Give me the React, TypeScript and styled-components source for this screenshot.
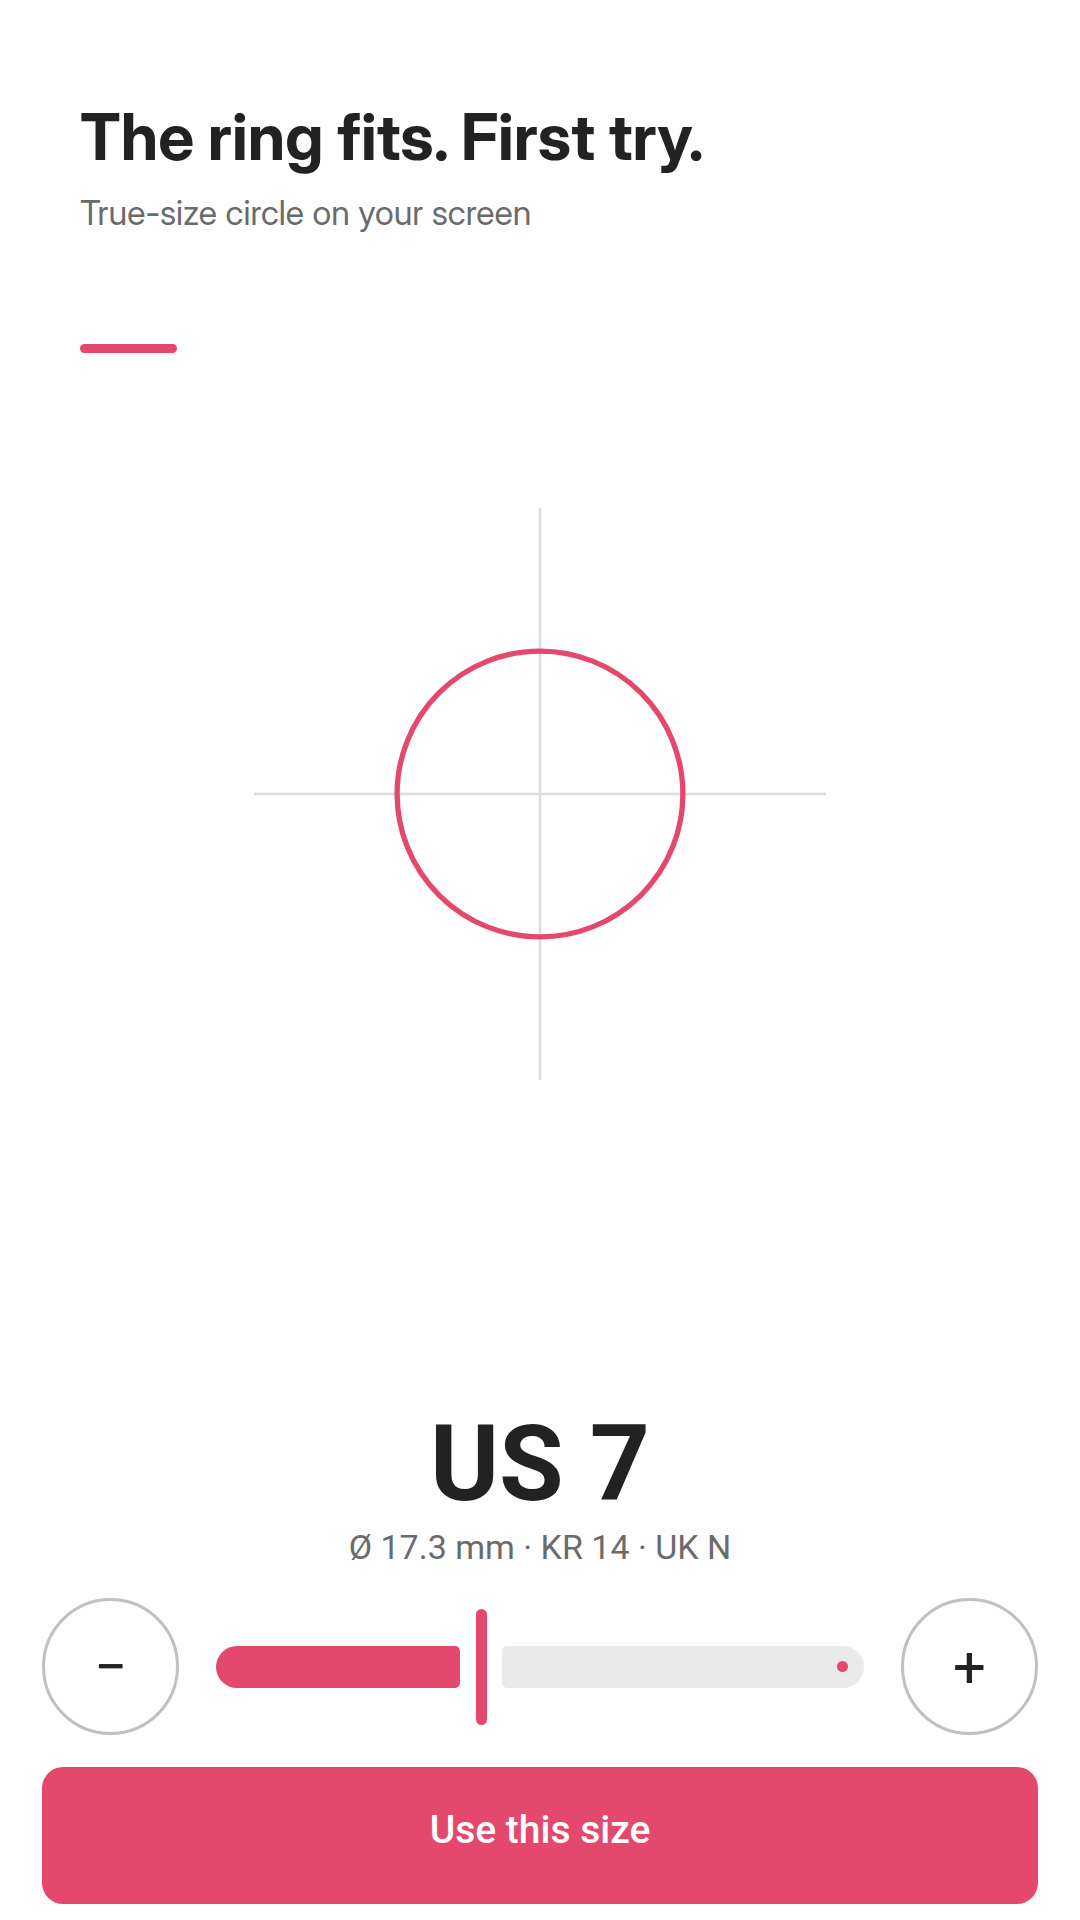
import React, { useState } from "react";
import styled, { createGlobalStyle } from "styled-components";

const color = {
  page: "#fefefe",
  ink: "#222222",
  muted: "#6b6b6b",
  accent: "#e5486d",
  outline: "#c0c0c0",
  rail: "#eaeaea",
  guide: "#e0dcdd",
};

const MIN_SIZE = 1.5;
const MAX_SIZE = 15;
const STEP = 0.5;
const PX_PER_MM = 16.5;

const GlobalStyle = createGlobalStyle`
  *, *::before, *::after { box-sizing: border-box; }
  body { margin: 0; background: ${color.page}; }
  button, input { font: inherit; margin: 0; }
`;

const Page = styled.main`
  display: flex;
  flex-direction: column;
  min-height: 100vh;
  color: ${color.ink};
  font-family: Roboto, sans-serif;
`;

const Header = styled.header`
  display: flex;
  flex-direction: column;
  padding: 99px 80px 0;
  font-family: "Inter Display", Inter, sans-serif;
`;

const Title = styled.h1`
  margin: 0;
  font-size: 64px;
  line-height: 76px;
  font-weight: 700;
`;

const Subtitle = styled.p`
  margin: 16px 0 0;
  font-size: 34px;
  line-height: 44px;
  color: ${color.muted};
`;

const AccentBar = styled.div`
  width: 97px;
  height: 9px;
  margin-top: 109px;
  border-radius: 5px;
  background: ${color.accent};
`;

const Stage = styled.section`
  display: flex;
  flex: 1;
  align-items: center;
  justify-content: center;
  padding: 0 24px 168px;
`;

const Target = styled.svg`
  display: block;
  width: 572px;
  max-width: 100%;
  height: auto;
`;

const Controls = styled.section`
  display: flex;
  flex-direction: column;
  padding: 0 42px 16px;
`;

const Size = styled.h2`
  margin: 0;
  font-size: 105px;
  line-height: 124px;
  font-weight: 700;
  text-align: center;
`;

const Details = styled.p`
  margin: 0;
  font-size: 34px;
  line-height: 40px;
  text-align: center;
  color: ${color.muted};
`;

const Adjuster = styled.div`
  display: flex;
  align-items: center;
  gap: 37px;
  margin-top: 31px;
`;

const RoundButton = styled.button`
  flex: none;
  width: 137px;
  height: 137px;
  padding: 0;
  border: 3px solid ${color.outline};
  border-radius: 50%;
  background: transparent;
  color: ${color.ink};
  font-size: 58px;
  line-height: 68px;
  font-weight: 400;
  cursor: pointer;
`;

const Slider = styled.div`
  display: grid;
  flex: 1;
  min-width: 0;
  align-items: center;

  > * { grid-area: 1 / 1; }
`;

const Rail = styled.div`
  display: flex;
  gap: 42px;
  height: 42px;
`;

const Filled = styled.div`
  flex: none;
  border-radius: 21px 5px 5px 21px;
  background: ${color.accent};
`;

const Rest = styled.div`
  display: flex;
  flex: 1;
  align-items: center;
  justify-content: flex-end;
  padding-right: 16px;
  border-radius: 5px 21px 21px 5px;
  background: ${color.rail};
`;

const EndDot = styled.span`
  width: 11px;
  height: 11px;
  border-radius: 50%;
  background: ${color.accent};
`;

const Range = styled.input`
  appearance: none;
  width: 100%;
  height: 116px;
  background: transparent;
  cursor: pointer;

  &::-webkit-slider-thumb {
    appearance: none;
    width: 11px;
    height: 116px;
    border-radius: 6px;
    background: ${color.accent};
  }

  &::-moz-range-thumb {
    width: 11px;
    height: 116px;
    border: 0;
    border-radius: 6px;
    background: ${color.accent};
  }
`;

const PrimaryButton = styled.button`
  height: 137px;
  margin-top: 32px;
  padding: 0 32px 12px;
  border: 0;
  border-radius: 21px;
  background: ${color.accent};
  color: #ffffff;
  font-size: 39px;
  line-height: 46px;
  font-weight: 500;
  cursor: pointer;
`;

function ukSize(us: number) {
  const index = 2 + (us - MIN_SIZE) / STEP;
  return index < 26 ? String.fromCharCode(65 + index) : `Z+${index - 25}`;
}

export default function App() {
  const [size, setSize] = useState(7);
  const diameter = 11.63 + 0.8128 * size;
  const progress = (size - MIN_SIZE) / (MAX_SIZE - MIN_SIZE);
  const change = (next: number) =>
    setSize(Math.min(MAX_SIZE, Math.max(MIN_SIZE, next)));

  return (
    <Page>
      <GlobalStyle />
      <Header>
        <Title>The ring fits. First try.</Title>
        <Subtitle>True-size circle on your screen</Subtitle>
        <AccentBar />
      </Header>

      <Stage>
        <Target viewBox="0 0 572 572" fill="none" aria-hidden="true">
          <path d="M286 0V572M0 286H572" stroke={color.guide} strokeWidth="2.6" />
          <circle
            cx="286"
            cy="286"
            r={(diameter * PX_PER_MM) / 2}
            stroke={color.accent}
            strokeWidth="5.3"
          />
        </Target>
      </Stage>

      <Controls>
        <Size>US {size}</Size>
        <Details>
          Ø {diameter.toFixed(1)} mm · KR {size * 2} · UK {ukSize(size)}
        </Details>
        <Adjuster>
          <RoundButton aria-label="Smaller" onClick={() => change(size - STEP)}>
            −
          </RoundButton>
          <Slider>
            <Rail>
              <Filled
                style={{ width: `max(0px, calc((100% - 11px) * ${progress} - 16px))` }}
              />
              <Rest>
                <EndDot />
              </Rest>
            </Rail>
            <Range
              type="range"
              aria-label="Ring size"
              min={MIN_SIZE}
              max={MAX_SIZE}
              step={STEP}
              value={size}
              onChange={(event) => change(Number(event.target.value))}
            />
          </Slider>
          <RoundButton aria-label="Larger" onClick={() => change(size + STEP)}>
            +
          </RoundButton>
        </Adjuster>
        <PrimaryButton>Use this size</PrimaryButton>
      </Controls>
    </Page>
  );
}
